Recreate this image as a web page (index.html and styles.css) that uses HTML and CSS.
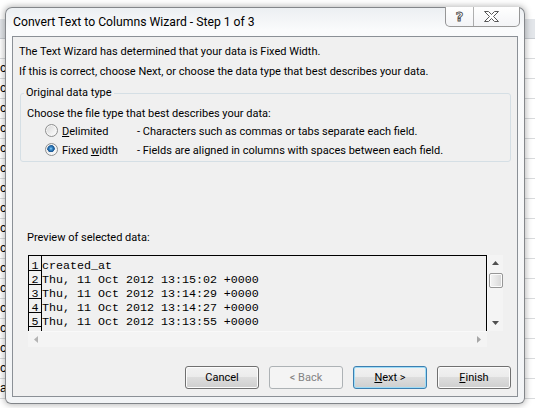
FILE: index.html
```html
<!DOCTYPE html>
<html>
<head>
<meta charset="utf-8">
<title>Convert Text to Columns Wizard</title>
<link rel="stylesheet" href="styles.css">
</head>
<body>
<div class="sheet">
  <div class="sheet-top"></div>
  <div class="sheet-head"></div>
  <div class="row"><div class="cell-a"></div><div class="cell-b"></div></div>
  <div class="row"><div class="cell-a"><span>c</span></div><div class="cell-b"></div></div>
  <div class="row"><div class="cell-a"><span>c</span></div><div class="cell-b"></div></div>
  <div class="row"><div class="cell-a"><span>c</span></div><div class="cell-b"></div></div>
  <div class="row"><div class="cell-a"><span>c</span></div><div class="cell-b"></div></div>
  <div class="row"><div class="cell-a"><span>c</span></div><div class="cell-b"></div></div>
  <div class="row"><div class="cell-a"><span>c</span></div><div class="cell-b"></div></div>
  <div class="row"><div class="cell-a"><span>c</span></div><div class="cell-b"></div></div>
  <div class="row"><div class="cell-a"><span>c</span></div><div class="cell-b"></div></div>
  <div class="row"><div class="cell-a"><span>c</span></div><div class="cell-b"></div></div>
  <div class="row"><div class="cell-a"><span>c</span></div><div class="cell-b"></div></div>
  <div class="row"><div class="cell-a"><span>c</span></div><div class="cell-b"></div></div>
  <div class="row"><div class="cell-a"><span>c</span></div><div class="cell-b"></div></div>
  <div class="row"><div class="cell-a"><span>c</span></div><div class="cell-b"></div></div>
  <div class="row"><div class="cell-a"><span>c</span></div><div class="cell-b"></div></div>
  <div class="row"><div class="cell-a"><span>c</span></div><div class="cell-b"></div></div>
  <div class="row"><div class="cell-a"><span>c</span></div><div class="cell-b"></div></div>
  <div class="row"><div class="cell-a"><span>atulttp</span><span>2.565+17</span></div><div class="cell-b"></div></div>
</div>

<div class="dialog">
  <div class="titlebar">
    <span class="title">Convert Text to Columns Wizard - Step 1 of 3</span>
    <div class="caption-btns">
      <span class="cbtn help">?</span>
      <span class="cbtn close">
        <svg width="15" height="11" viewBox="0 0 15 11"><path d="M0.5 0.5H4.5L7.5 3.5L10.5 0.5H14.5L9.5 5.5L14.5 10.5H10.5L7.5 7.5L4.5 10.5H0.5L5.5 5.5Z" fill="#fff" stroke="#575757" stroke-width="1"/></svg>
      </span>
    </div>
  </div>
  <div class="client">
    <p>The Text Wizard has determined that your data is Fixed Width.</p>
    <p class="l2">If this is correct, choose Next, or choose the data type that best describes your data.</p>
    <fieldset class="group">
      <legend>Original data type</legend>
      <p>Choose the file type that best describes your data:</p>
      <div class="opt"><span class="radio"></span><span class="opt-label"><u>D</u>elimited</span><span class="opt-desc">- Characters such as commas or tabs separate each field.</span></div>
      <div class="opt"><span class="radio checked"></span><span class="opt-label">Fixed <u>w</u>idth</span><span class="opt-desc">- Fields are aligned in columns with spaces between each field.</span></div>
    </fieldset>
    <p class="preview-label">Preview of selected data:</p>
    <div class="preview">
      <div class="pv-text">
        <div class="pv-nums"><div>1</div><div>2</div><div>3</div><div>4</div><div>5</div></div>
        <div class="pv-lines"><div>created_at</div><div>Thu, 11 Oct 2012 13:15:02 +0000</div><div>Thu, 11 Oct 2012 13:14:29 +0000</div><div>Thu, 11 Oct 2012 13:14:27 +0000</div><div>Thu, 11 Oct 2012 13:13:55 +0000</div></div>
      </div>
      <div class="vscroll">
        <div class="sb-btn"><svg width="7" height="4" viewBox="0 0 7 4"><path d="M0 4H7L3.5 0Z" fill="#505050"/></svg></div>
        <div class="thumb"></div>
        <div class="sb-fill"></div>
        <div class="sb-btn"><svg width="7" height="4" viewBox="0 0 7 4"><path d="M0 0H7L3.5 4Z" fill="#505050"/></svg></div>
      </div>
      <div class="hscroll">
        <div class="sb-btn h"><svg width="4" height="7" viewBox="0 0 4 7"><path d="M4 0V7L0 3.5Z" fill="#b4b4b4"/></svg></div>
        <div class="sb-fill"></div>
        <div class="sb-btn h"><svg width="4" height="7" viewBox="0 0 4 7"><path d="M0 0V7L4 3.5Z" fill="#a6a6a6"/></svg></div>
      </div>
      <div class="corner"></div>
    </div>
    <div class="buttons">
      <span class="btn">Cancel</span>
      <span class="btn disabled">&lt; Back</span>
      <span class="btn default"><span><u>N</u>ext &gt;</span></span>
      <span class="btn"><span><u>F</u>inish</span></span>
    </div>
  </div>
</div>
</body>
</html>
```
FILE: styles.css
```css
* { box-sizing: border-box; }
html, body { margin: 0; padding: 0; }
body {
  width: 535px;
  height: 408px;
  overflow: hidden;
  position: relative;
  background: #fff;
  font-family: Roboto, "Liberation Sans", Arial, sans-serif;
}

/* spreadsheet behind the dialog */
.sheet { font: 12.5px "Liberation Sans", Arial, sans-serif; color: #000; }
.sheet-top { height: 19px; background: #fff; }
.sheet-head { height: 20px; background: #e3e6ea; border-bottom: 1px solid #c8ccd1; }
.row {
  height: 20px;
  display: flex;
  line-height: 19px;
  border-bottom: 1px solid #d9dbdd;
}
.cell-a {
  width: 178px;
  display: flex;
  justify-content: space-between;
  padding-right: 2px;
  border-right: 1px solid #d9dbdd;
  white-space: nowrap;
  overflow: hidden;
}
.cell-b { width: 136px; border-right: 1px solid #d9dbdd; }

/* dialog window */
.dialog {
  position: absolute;
  left: 5px;
  top: 7px;
  width: 520px;
  height: 397px;
  display: flex;
  flex-direction: column;
  padding: 0 6px 6px;
  border: 1px solid rgba(40, 44, 50, 0.55);
  border-radius: 7px 7px 6px 6px;
  background: linear-gradient(#eceff2, #fafbfc 22px, #f6f7f8 60%, #f2f4f6);
  box-shadow: 0 0 6px 1px rgba(0, 0, 0, 0.28);
}
.titlebar {
  height: 28px;
  margin: 0 -6px;
  padding: 0 4px 0 7px;
  display: flex;
  align-items: center;
}
.title {
  flex: 1;
  font-size: 12.2px;
  color: #000;
  white-space: nowrap;
}
.caption-btns {
  align-self: flex-start;
  margin-top: -1px;
  height: 20px;
  display: flex;
  border: 1px solid rgba(0, 0, 0, 0.4);
  border-top: 0;
  border-radius: 0 0 5px 5px;
  background: linear-gradient(#ffffff, #f3f4f6);
  overflow: hidden;
}
.cbtn { display: flex; align-items: center; justify-content: center; }
.help {
  width: 28px;
  border-right: 1px solid rgba(0, 0, 0, 0.3);
  font: bold 13px "DejaVu Sans", sans-serif;
  color: #fff;
  -webkit-text-stroke: 0.9px #505050;
  padding-bottom: 1px;
}
.close { width: 45px; padding-right: 11px; padding-bottom: 1px; }

/* client area */
.client {
  flex: 1;
  display: flex;
  flex-direction: column;
  padding: 7px 0 7px 6px;
  background: #f0f0f0;
  border: 1px solid #8b9096;
  font-size: 11px;
  line-height: 16px;
  color: #000;
}
p { margin: 0; white-space: nowrap; }
.l2 { margin-top: 4px; }

.group {
  margin: 5px 6px 0 1px;
  padding: 5px 0 1px 6px;
  border: 1px solid #d5dfe5;
  border-radius: 3px;
  min-width: 0;
}
.group legend { padding: 0 2px; margin-left: -3px; }
.opt { display: flex; align-items: center; height: 19px; white-space: nowrap; }
.radio {
  width: 13px;
  height: 13px;
  flex: none;
  margin: 0 4px 3px 18px;
  border-radius: 50%;
  border: 1px solid #8e8f8f;
  background: linear-gradient(135deg, #d4d4d4, #f4f4f4 70%, #fafafa);
  box-shadow: inset 0 0 0 1px #f6f6f6;
}
.radio.checked {
  background:
    radial-gradient(circle at 45% 42%, #9fd8fa 0, #3b8fd0 1.3px, #1f5a95 3px, #2d6aa3 3.6px, rgba(45,106,163,0) 3.9px),
    linear-gradient(135deg, #d4d4d4, #f4f4f4 70%, #fafafa);
}
.opt-label { width: 75px; flex: none; }

.preview-label { margin: 68px 0 0 8px; }

.preview {
  margin: 9px 0 0 9px;
  width: 475px;
  display: grid;
  grid-template-columns: 459px 16px;
  grid-template-rows: 76px 16px;
}
.pv-text {
  display: flex;
  overflow: hidden;
  border: 1px solid #000;
  border-bottom: 0;
  font: 11.66px/14px "Liberation Mono", "Courier New", monospace;
  color: #000;
}
.pv-nums {
  width: 13px;
  flex: none;
  padding-top: 3px;
  border-right: 1px solid #000;
}
.pv-nums div {
  height: 14px;
  text-align: center;
  background: linear-gradient(#000, #000) no-repeat 0 11px / 100% 1px;
}
.pv-lines { padding-top: 3px; white-space: pre; }

.vscroll {
  display: flex;
  flex-direction: column;
  background: #f4f4f4;
  border-left: 1px solid #f9f9f9;
}
.sb-btn { height: 16px; flex: none; display: flex; align-items: center; justify-content: center; }
.sb-btn.h { width: 16px; height: auto; }
.sb-fill { flex: 1; }
.thumb {
  height: 15px;
  margin: 2px 0 0 1px;
  width: 14px;
  border: 1px solid #969696;
  border-radius: 2px;
  background: linear-gradient(90deg, #f4f4f4, #e6e6e6 50%, #d6d6d6);
  box-shadow: inset 0 0 0 1px #fbfbfb;
}
.hscroll {
  display: flex;
  background: #f4f4f4;
  border-top: 1px solid #f9f9f9;
}
.corner { background: #f0f0f0; }

.buttons {
  margin-top: auto;
  display: flex;
  justify-content: flex-end;
  gap: 10px;
  padding-right: 6px;
}
.btn {
  width: 74px;
  height: 23px;
  display: flex;
  align-items: center;
  justify-content: center;
  border: 1px solid #707070;
  border-radius: 3px;
  background: linear-gradient(#f2f2f2, #ebebeb 50%, #dddddd 50%, #cfcfcf);
  box-shadow: inset 0 0 0 1px #fcfcfc;
  color: #000;
  font-size: 11px;
}
.btn.disabled {
  border-color: #adb2b5;
  background: #f4f4f4;
  box-shadow: none;
  color: #838383;
}
.btn.default {
  border-color: #3c7fb1;
  box-shadow: inset 0 0 0 1px #9fdcf6;
}
```
